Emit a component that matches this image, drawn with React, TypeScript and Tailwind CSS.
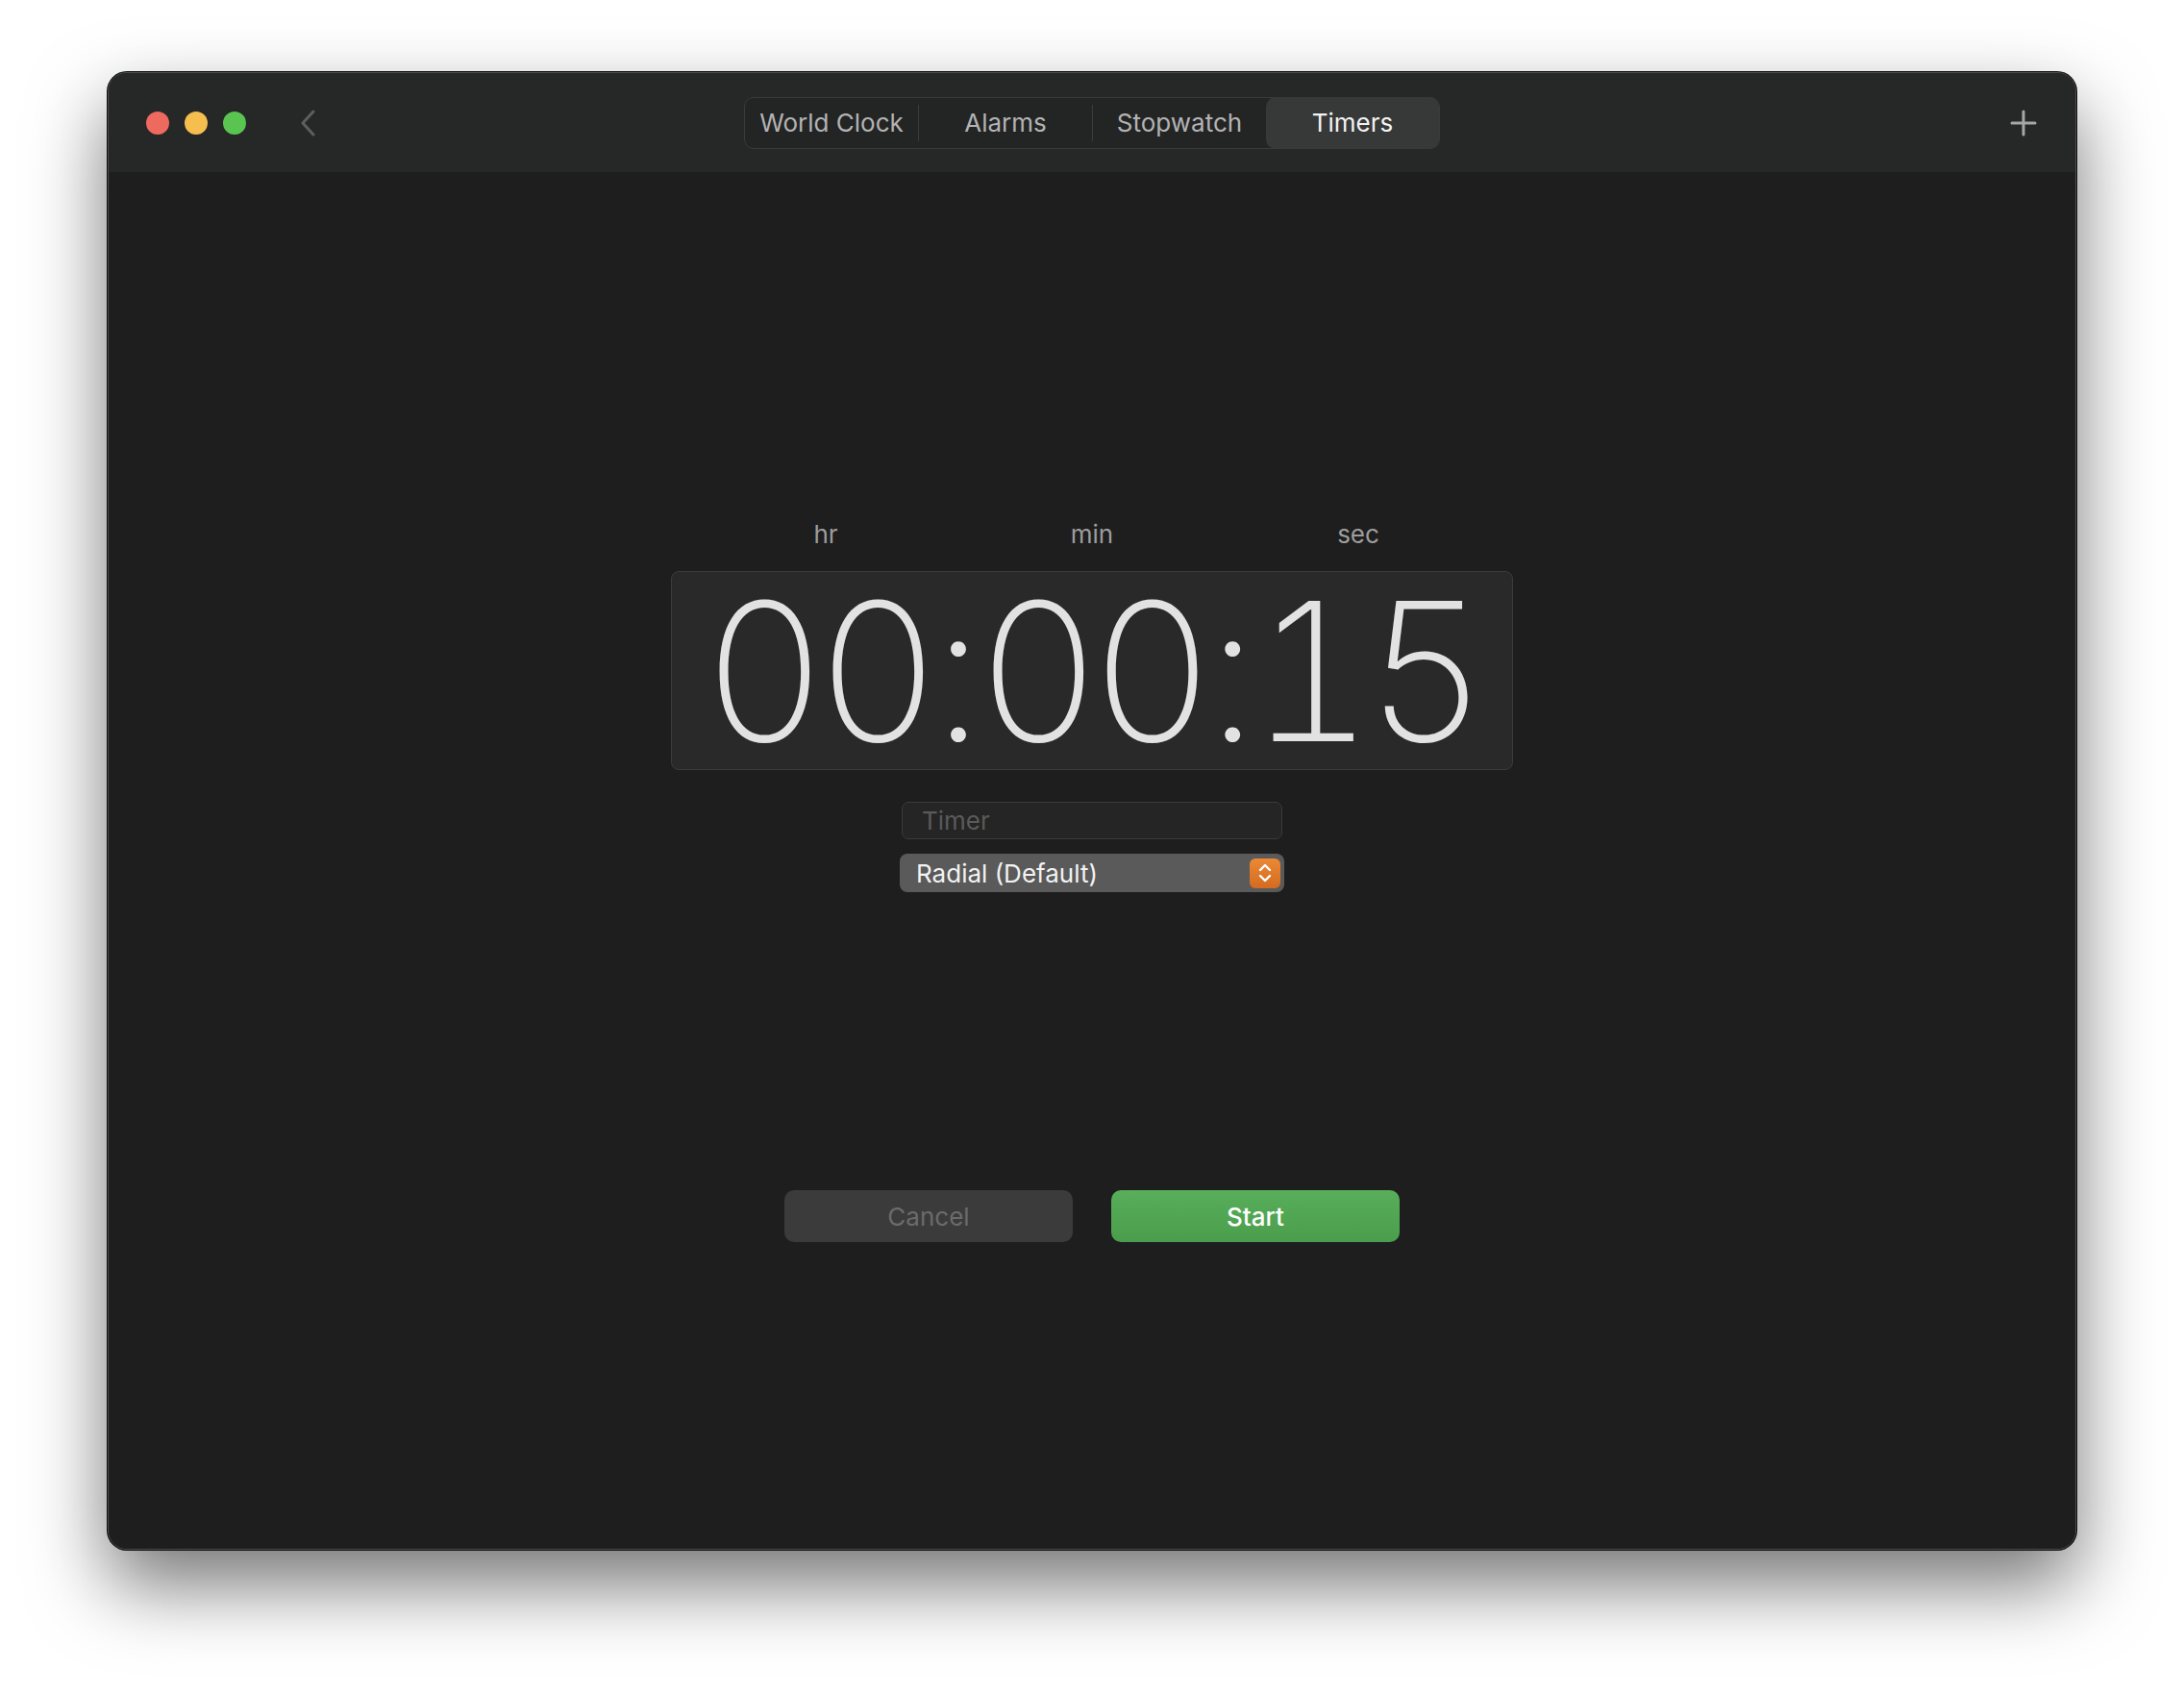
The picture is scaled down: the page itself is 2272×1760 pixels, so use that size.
import React from 'react';

const tabs = ['World Clock', 'Alarms', 'Stopwatch', 'Timers'];

const App = () => {
    return (
        <div className="w-[2272px] h-[1760px] bg-white pt-[75px] pl-[112px] font-['Inter',sans-serif]">
            <div className="flex h-[1537px] w-[2048px] flex-col overflow-hidden rounded-[20px] border border-[#4e4e4e] bg-[#1e1e1e] shadow-[0_0_0_1px_#0c0c0c,0_36px_80px_rgba(0,0,0,0.55)]">
                {/* Title bar */}
                <div className="grid h-[103px] shrink-0 grid-cols-[1fr_auto_1fr] items-center bg-[#262727] pl-[39px] pr-[39px]">
                    <div className="flex items-center">
                        <span className="h-6 w-6 rounded-full bg-[#ee6a5f]" />
                        <span className="ml-4 h-6 w-6 rounded-full bg-[#f5be4f]" />
                        <span className="ml-4 h-6 w-6 rounded-full bg-[#5ac451]" />
                        <svg className="ml-[56px]" width="16" height="28" viewBox="0 0 16 28" fill="none">
                            <path d="M14 2 L3 14 L14 26" stroke="#5d5e5e" strokeWidth="3" strokeLinecap="round" strokeLinejoin="round" />
                        </svg>
                    </div>

                    <div className="flex h-[54px] items-center rounded-[10px] border border-[#3a3b3b] bg-[#232424]">
                        {tabs.map((tab, i) => (
                            <React.Fragment key={tab}>
                                {i > 0 && i < 3 && <span className="h-[38px] w-px bg-[#3a3b3b]" />}
                                <div
                                    className={
                                        tab === 'Timers'
                                            ? 'flex h-[54px] w-[180px] items-center justify-center rounded-[10px] bg-[#373838] text-[26px] text-[#f2f2f2]'
                                            : 'flex h-[54px] w-[180px] items-center justify-center text-[26px] text-[#b3b3b3]'
                                    }
                                >
                                    {tab}
                                </div>
                            </React.Fragment>
                        ))}
                    </div>

                    <div className="flex justify-end pr-[1px]">
                        <svg width="28" height="28" viewBox="0 0 28 28" fill="none">
                            <path d="M14 2 V26 M2 14 H26" stroke="#a6a6a6" strokeWidth="3" strokeLinecap="round" />
                        </svg>
                    </div>
                </div>

                {/* Timer setup */}
                <div className="flex flex-1 flex-col items-center bg-[#1e1e1e] pt-[361px]">
                    <div className="flex text-[26px] leading-[32px] text-[#9d9d9d]">
                        <div className="w-[277px] text-center">hr</div>
                        <div className="w-[277px] text-center">min</div>
                        <div className="w-[277px] text-center">sec</div>
                    </div>

                    <div className="mt-[22px] flex h-[207px] w-[876px] items-center justify-center rounded-[8px] border border-[#3b3b3b] bg-[#292929]">
                        <span className="pr-[4px] text-[200px] leading-none font-extralight tabular-nums tracking-[-11px] text-[#e2e2e2]">
                            00<span className="mx-[3px]">:</span>00<span className="mx-[3px]">:</span>15
                        </span>
                    </div>

                    <div className="mt-[33px] flex h-[39px] w-[396px] items-center rounded-[7px] border border-[#3a3a3a] bg-[#252525] px-[20px] text-[26px] text-[#5a5a5a]">
                        Timer
                    </div>

                    <div className="mt-[15px] flex h-[40px] w-[400px] items-center justify-between rounded-[8px] bg-[#5a5a5a] pl-[17px] pr-[4px] text-[26px] text-[#f2f2f2]">
                        <span>Radial (Default)</span>
                        <span className="flex h-[31px] w-[32px] items-center justify-center rounded-[6px] bg-gradient-to-b from-[#ec8935] to-[#d36b20]">
                            <svg width="16" height="24" viewBox="0 0 16 24" fill="none">
                                <path d="M3 9 L8 4 L13 9 M3 15 L8 20 L13 15" stroke="#ffffff" strokeWidth="2.4" strokeLinecap="round" strokeLinejoin="round" />
                            </svg>
                        </span>
                    </div>

                    <div className="mt-[310px] flex gap-[40px]">
                        <button className="h-[54px] w-[300px] rounded-[10px] bg-[#3b3b3b] text-[26px] text-[#6b6b6b]">
                            Cancel
                        </button>
                        <button className="h-[54px] w-[300px] rounded-[10px] bg-gradient-to-b from-[#58ae5a] to-[#4a9d4c] text-[26px] font-medium text-white">
                            Start
                        </button>
                    </div>
                </div>
            </div>
        </div>
    );
};

export default App;
